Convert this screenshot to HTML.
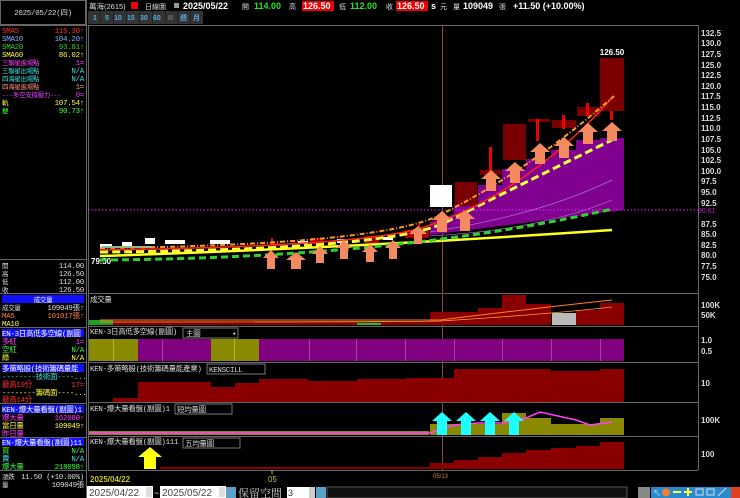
<!DOCTYPE html>
<html><head><meta charset="utf-8"><style>
html,body{margin:0;padding:0;background:#000;width:740px;height:498px;overflow:hidden}
svg{display:block;font-family:"Liberation Sans","Noto Sans CJK TC",sans-serif}
.m{font-family:"Liberation Mono","Noto Sans CJK TC",monospace;font-size:7.5px;letter-spacing:-0.3px}
</style></head><body>
<svg width="740" height="498" viewBox="0 0 740 498" xmlns="http://www.w3.org/2000/svg">
<rect width="740" height="498" fill="#000"/>
<!-- left panel -->
<rect x="0.5" y="0.5" width="85" height="24" fill="#000" stroke="#666"/>
<text x="43" y="15" class="m" fill="#ddd" text-anchor="middle">2025/05/22(四)</text>
<line x1="86.5" y1="0" x2="86.5" y2="498" stroke="#666"/>
<line x1="0" y1="25.5" x2="86" y2="25.5" stroke="#666"/>
<g class="m">
<text x="2" y="33" fill="#ff3030">SMA5</text><text x="84" y="33" fill="#ff3030" text-anchor="end">115.30↑</text>
<text x="2" y="41" fill="#7ab8ff">SMA10</text><text x="84" y="41" fill="#7ab8ff" text-anchor="end">104.20↑</text>
<text x="2" y="49" fill="#30d030">SMA20</text><text x="84" y="49" fill="#30d030" text-anchor="end">93.81↑</text>
<text x="2" y="57" fill="#ffff40">SMA60</text><text x="84" y="57" fill="#ffff40" text-anchor="end">86.02↑</text>
<text x="2" y="65" fill="#ff40ff" font-size="6.5">三聯星進場點</text><text x="84" y="65" fill="#ff40ff" text-anchor="end">1=</text>
<text x="2" y="73" fill="#40e0e0" font-size="6.5">三聯星出場點</text><text x="84" y="73" fill="#40e0e0" text-anchor="end">N/A</text>
<text x="2" y="81" fill="#40e0e0" font-size="6.5">四海星出場點</text><text x="84" y="81" fill="#40e0e0" text-anchor="end">N/A</text>
<text x="2" y="89" fill="#ff9080" font-size="6.5">四海星進場點</text><text x="84" y="89" fill="#ff9080" text-anchor="end">1=</text>
<text x="2" y="97" fill="#e040ff" font-size="6.5">---多空支撐壓力---</text><text x="84" y="97" fill="#e040ff" text-anchor="end">0=</text>
<text x="2" y="105" fill="#ffff40" font-size="6.5">軌</text><text x="84" y="105" fill="#ffff40" text-anchor="end">107.54↑</text>
<text x="2" y="113" fill="#40ff40" font-size="6.5">梗</text><text x="84" y="113" fill="#40ff40" text-anchor="end">90.73↑</text>
</g>
<line x1="0" y1="259.5" x2="86" y2="259.5" stroke="#666"/>
<g class="m" fill="#ddd">
<text x="2" y="268" font-size="6.5">開</text><text x="84" y="268" text-anchor="end">114.00</text>
<text x="2" y="276" font-size="6.5">高</text><text x="84" y="276" text-anchor="end">126.50</text>
<text x="2" y="284" font-size="6.5">低</text><text x="84" y="284" text-anchor="end">112.00</text>
<text x="2" y="292" font-size="6.5">收</text><text x="84" y="292" text-anchor="end">126.50</text>
</g>
<line x1="0" y1="293.5" x2="86" y2="293.5" stroke="#666"/>
<rect x="2" y="295" width="82" height="8" fill="#1010ff"/>
<g class="m">
<text x="43" y="302" fill="#fff" text-anchor="middle" font-size="6.5">成交量</text>
<text x="2" y="310" fill="#ddd" font-size="6.5">成交量</text><text x="84" y="310" fill="#ddd" text-anchor="end">109049張↑</text>
<text x="2" y="318" fill="#ff8040">MA5</text><text x="84" y="318" fill="#ff8040" text-anchor="end">101017張↑</text>
<text x="2" y="326" fill="#ffff40">MA10</text>
</g>
<line x1="0" y1="327.5" x2="86" y2="327.5" stroke="#666"/>
<rect x="2" y="329" width="82" height="8" fill="#1010ff"/>
<g class="m" font-size="6.5">
<text x="2" y="336" fill="#fff">EN-3日高低多空線(副圖</text>
<text x="2" y="344" fill="#ff40ff">多紅</text><text x="84" y="344" fill="#ff40ff" text-anchor="end">1=</text>
<text x="2" y="352" fill="#40ff40">空紅</text><text x="84" y="352" fill="#40ff40" text-anchor="end">N/A</text>
<text x="2" y="360" fill="#ffff40">綠</text><text x="84" y="360" fill="#ffff40" text-anchor="end">N/A</text>
</g>
<line x1="0" y1="362.5" x2="86" y2="362.5" stroke="#666"/>
<rect x="2" y="364" width="82" height="8" fill="#1010ff"/>
<g class="m" font-size="6.5">
<text x="2" y="371" fill="#fff">多策略股(技術籌碼量能</text>
<text x="2" y="379" fill="#40e0e0">--------技術面----...</text>
<text x="2" y="387" fill="#ff3030">最高19分</text><text x="84" y="387" fill="#ff3030" text-anchor="end">17=</text>
<text x="2" y="395" fill="#ffff40">--------籌碼面----...</text>
<text x="2" y="402" fill="#ff3030">最高14分</text>
</g>
<line x1="0" y1="403.5" x2="86" y2="403.5" stroke="#666"/>
<rect x="2" y="405" width="82" height="8" fill="#1010ff"/>
<g class="m" font-size="6.5">
<text x="2" y="412" fill="#fff">KEN-爆大量看盤(副圖)1</text>
<text x="2" y="420" fill="#ff40ff">爆大量</text><text x="84" y="420" fill="#ff40ff" text-anchor="end">162080↑</text>
<text x="2" y="428" fill="#ffff40">當日量</text><text x="84" y="428" fill="#ffff40" text-anchor="end">109049↑</text>
<text x="2" y="436" fill="#ff40ff">昨日量</text>
</g>
<line x1="0" y1="437.5" x2="86" y2="437.5" stroke="#666"/>
<rect x="2" y="438" width="82" height="8" fill="#1010ff"/>
<g class="m" font-size="6.5">
<text x="2" y="445" fill="#fff">EN-爆大量看盤(副圖)11</text>
<text x="2" y="453" fill="#40ff40">買</text><text x="84" y="453" fill="#40ff40" text-anchor="end">N/A</text>
<text x="2" y="461" fill="#40e0e0">賣</text><text x="84" y="461" fill="#40e0e0" text-anchor="end">N/A</text>
<text x="2" y="469" fill="#40ff40">爆大量</text><text x="84" y="469" fill="#40ff40" text-anchor="end">218098↑</text>
</g>
<line x1="0" y1="470.5" x2="86" y2="470.5" stroke="#666"/>
<g class="m" fill="#ddd">
<text x="2" y="479" font-size="6.5">漲跌</text><text x="84" y="479" text-anchor="end">11.50 (+10.00%)</text>
<text x="2" y="487" font-size="6.5">量</text><text x="84" y="487" text-anchor="end">109049張</text>
</g>
<!-- header -->
<g font-size="9" font-weight="bold">
<text x="89" y="9" fill="#ddd" font-weight="normal" font-size="7.5">萬海(2615)</text>
<rect x="131" y="2" width="7" height="7" fill="#e00"/>
<text x="145" y="9" fill="#ddd" font-weight="normal" font-size="7">日線圖</text>
<rect x="174" y="3" width="5" height="5" fill="#999"/>
<text x="183" y="9" fill="#fff">2025/05/22</text>
<text x="242" y="9" fill="#ddd" font-weight="normal" font-size="7">開</text>
<text x="254" y="9" fill="#30e030">114.00</text>
<text x="289" y="9" fill="#ddd" font-weight="normal" font-size="7">高</text>
<rect x="302" y="1" width="32" height="10" fill="#e00"/>
<text x="303" y="9" fill="#fff">126.50</text>
<text x="339" y="9" fill="#ddd" font-weight="normal" font-size="7">低</text>
<text x="350" y="9" fill="#30e030">112.00</text>
<text x="386" y="9" fill="#ddd" font-weight="normal" font-size="7">收</text>
<rect x="396" y="1" width="32" height="10" fill="#e00"/>
<text x="397" y="9" fill="#fff">126.50</text>
<text x="431" y="9" fill="#fff">s</text>
<text x="440" y="9" fill="#ddd" font-weight="normal" font-size="7">元</text>
<text x="453" y="9" fill="#ddd" font-weight="normal" font-size="7">量</text>
<text x="463" y="9" fill="#fff">109049</text>
<text x="499" y="9" fill="#ddd" font-weight="normal" font-size="7">張</text>
<text x="513" y="9" fill="#fff">+11.50 (+10.00%)</text>
</g>
<g font-size="7" font-weight="bold">
<rect x="88" y="11" width="115" height="13" fill="#333"/>
<text x="93" y="20" fill="#5ad">1</text><text x="105" y="20" fill="#5ad">5</text>
<text x="114" y="20" fill="#5ad">10</text><text x="127" y="20" fill="#5ad">15</text>
<text x="140" y="20" fill="#5ad">30</text><text x="153" y="20" fill="#5ad">60</text>
<rect x="168" y="15" width="5" height="5" fill="#555"/>
<text x="180" y="20" fill="#5ad">週</text><text x="193" y="20" fill="#5ad">月</text>
<g stroke="#222"><line x1="100.5" y1="11" x2="100.5" y2="24"/><line x1="113.5" y1="11" x2="113.5" y2="24"/><line x1="126.5" y1="11" x2="126.5" y2="24"/><line x1="139.5" y1="11" x2="139.5" y2="24"/><line x1="152.5" y1="11" x2="152.5" y2="24"/><line x1="165.5" y1="11" x2="165.5" y2="24"/><line x1="177.5" y1="11" x2="177.5" y2="24"/><line x1="190.5" y1="11" x2="190.5" y2="24"/></g>
</g>
<!-- chart frames -->
<g stroke="#666" fill="none">
<line x1="88" y1="25.5" x2="698" y2="25.5"/>
<line x1="88.5" y1="25" x2="88.5" y2="470"/>
<line x1="698.5" y1="25" x2="698.5" y2="470"/>
<line x1="88" y1="293.5" x2="698" y2="293.5"/>
<line x1="88" y1="326.5" x2="698" y2="326.5"/>
<line x1="88" y1="362.5" x2="698" y2="362.5"/>
<line x1="88" y1="402.5" x2="698" y2="402.5"/>
<line x1="88" y1="436.5" x2="698" y2="436.5"/>
<line x1="88" y1="470.5" x2="698" y2="470.5"/>
</g>
<line x1="442.5" y1="25" x2="442.5" y2="470" stroke="#8a4a30" stroke-width="1"/>
<!-- price axis -->
<g font-size="8" font-weight="bold" fill="#ddd">
<text x="701" y="36">132.5</text><text x="701" y="46">130.0</text><text x="701" y="57">127.5</text><text x="701" y="68">125.0</text><text x="701" y="78">122.5</text><text x="701" y="89">120.0</text><text x="701" y="99">117.5</text><text x="701" y="110">115.0</text><text x="701" y="121">112.5</text><text x="701" y="131">110.0</text><text x="701" y="142">107.5</text><text x="701" y="153">105.0</text><text x="701" y="163">102.5</text><text x="701" y="174">100.0</text><text x="701" y="184">97.5</text><text x="701" y="195">95.0</text><text x="701" y="206">92.5</text><text x="701" y="227">87.5</text><text x="701" y="237">85.0</text><text x="701" y="248">82.5</text><text x="701" y="258">80.0</text><text x="701" y="269">77.5</text><text x="701" y="280">75.0</text>
<text x="701" y="308">100K</text><text x="701" y="318">50K</text>
<text x="701" y="343">1.0</text><text x="701" y="354">0.5</text>
<text x="701" y="386">10</text>
<text x="701" y="423">100K</text>
<text x="701" y="457">100</text>
</g>
<text x="698" y="213" font-size="7" fill="#c020c0">90.61</text>
<!-- purple area -->
<path d="M430 222 L454 214 L454 204 L478 204 L478 185 L502 185 L502 169 L526 169 L526 159 L551 159 L551 150 L576 150 L576 140 L600 140 L600 138 L624 138 L624 210 L430 235 Z" fill="#800090"/>
<path d="M430 232 Q540 215 612 180" stroke="#b070d0" fill="none" stroke-width="0.7"/>
<path d="M430 236 Q540 230 612 200" stroke="#a060c0" fill="none" stroke-width="0.7"/>
<line x1="88" y1="210" x2="698" y2="210" stroke="#ff20ff" stroke-dasharray="1.5,2"/>
<!-- small candles -->
<g fill="#fff">
<rect x="100" y="244" width="12" height="4"/><rect x="122" y="242" width="10" height="5"/><rect x="145" y="238" width="10" height="6"/><rect x="165" y="240" width="20" height="4"/><rect x="210" y="240" width="20" height="4"/>
<rect x="298" y="241" width="10" height="3"/><rect x="337" y="239" width="8" height="4"/><rect x="383" y="237" width="10" height="3"/>
</g>
<rect x="102" y="246" width="50" height="2" fill="#40d0d0"/>
<g fill="#a00">
<rect x="270" y="243" width="10" height="3"/><rect x="310" y="238" width="14" height="6"/><rect x="365" y="236" width="14" height="8"/><rect x="405" y="230" width="24" height="8"/>
</g>
<rect x="271" y="238" width="2" height="8" fill="#e00"/><rect x="418" y="224" width="2" height="8" fill="#e00"/>
<rect x="430" y="185" width="22" height="22" fill="#fff"/>
<!-- big candles -->
<g fill="#7a0000">
<rect x="455" y="182" width="22" height="24"/>
<rect x="480" y="170" width="21" height="5"/>
<rect x="503" y="124" width="23" height="36"/>
<rect x="528" y="119" width="22" height="3"/>
<rect x="552" y="120" width="24" height="8"/>
<rect x="577" y="107" width="23" height="9"/>
<rect x="600" y="58" width="24" height="53"/>
</g>
<g fill="#e00">
<rect x="489" y="147" width="3" height="28"/><rect x="536" y="119" width="3" height="22"/><rect x="562" y="115" width="3" height="14"/><rect x="586" y="103" width="3" height="13"/><rect x="610" y="111" width="3" height="9"/>
</g>
<text x="612" y="55" font-size="8" font-weight="bold" fill="#fff" text-anchor="middle">126.50</text>
<text x="91" y="264" font-size="8" font-weight="bold" fill="#fff">79.50</text>
<!-- MA lines -->
<path d="M100 256 Q350 248 612 230" stroke="#ffff20" stroke-width="2.5" fill="none"/>
<path d="M100 260 Q400 258 612 209" stroke="#30d030" stroke-width="3" stroke-dasharray="7,4" fill="none"/>
<path d="M100 252 Q400 250 450 220 Q540 175 612 140" stroke="#ffff40" stroke-width="3" stroke-dasharray="8,4" fill="none"/>
<path d="M100 250 Q380 246 430 225 Q530 190 612 98" stroke="#ff2020" stroke-width="1.5" fill="none"/>
<path d="M100 248 Q380 245 440 215 Q530 170 614 96" stroke="#ff9a20" stroke-width="2" stroke-dasharray="5,2,1,2" fill="none"/>
<!-- salmon arrows -->
<g fill="#f58a60">
<path d="M271 250 l-8 8 h4 v11 h8 v-11 h4 z"/>
<path d="M296 252 l-10 8 h5 v9 h10 v-9 h5 z"/>
<path d="M320 246 l-8 8 h4 v9 h8 v-9 h4 z"/>
<path d="M344 240 l-8 8 h4 v11 h8 v-11 h4 z"/>
<path d="M370 244 l-8 8 h4 v10 h8 v-10 h4 z"/>
<path d="M393 240 l-8 8 h4 v11 h8 v-11 h4 z"/>
<path d="M418 226 l-9 8 h5 v10 h8 v-10 h5 z"/>
<path d="M442 211 l-10 9 h5 v12 h10 v-12 h5 z"/>
<path d="M465 210 l-10 9 h5 v12 h10 v-12 h5 z"/>
<path d="M491 170 l-10 9 h5 v12 h10 v-12 h5 z"/>
<path d="M515 162 l-10 9 h5 v12 h10 v-12 h5 z"/>
<path d="M540 143 l-10 9 h5 v12 h10 v-12 h5 z"/>
<path d="M564 137 l-10 9 h5 v12 h10 v-12 h5 z"/>
<path d="M588 123 l-10 9 h5 v12 h10 v-12 h5 z"/>
<path d="M612 122 l-10 9 h5 v10 h10 v-10 h5 z"/>
</g>
<!-- volume panel -->
<text x="90" y="302" class="m" fill="#ddd" font-size="6.5">成交量</text>
<g fill="#8a0000">
<rect x="113" y="321" width="340" height="4"/>
<rect x="430" y="312" width="24" height="13"/><rect x="454" y="312" width="24" height="13"/><rect x="478" y="308" width="24" height="17"/><rect x="502" y="295" width="24" height="30"/><rect x="526" y="304" width="25" height="21"/><rect x="576" y="310" width="24" height="15"/><rect x="600" y="303" width="24" height="22"/>
</g>
<rect x="89" y="320" width="24" height="5" fill="#20a020"/><rect x="357" y="323" width="24" height="2" fill="#20c020"/>
<rect x="552" y="313" width="24" height="12" fill="#bbb"/>
<path d="M100 320 Q400 320 440 320 Q520 310 612 300" stroke="#ff8020" fill="none"/>
<path d="M100 322 Q400 322 440 321 Q540 315 612 307" stroke="#ffa030" fill="none" stroke-width="0.8"/>
<!-- panel2 -->
<text x="90" y="334" class="m" fill="#ddd" font-size="6.5">KEN-3日高低多空線(副圖)</text>
<rect x="183" y="328" width="55" height="10" fill="#000" stroke="#777"/><text x="186" y="336" class="m" fill="#ddd" font-size="6.5">主圖</text><text x="232" y="336" class="m" fill="#ddd">▪</text>
<rect x="89" y="339" width="49" height="22" fill="#8a8a00"/>
<rect x="138" y="339" width="73" height="22" fill="#800080"/>
<rect x="211" y="339" width="48" height="22" fill="#8a8a00"/>
<rect x="259" y="339" width="365" height="22" fill="#800080"/>
<g stroke="#c8c850" stroke-width="0.7"><line x1="113.5" y1="339" x2="113.5" y2="361"/><line x1="234.5" y1="339" x2="234.5" y2="361"/></g>
<g stroke="#b060b0" stroke-width="0.7"><line x1="162.5" y1="339" x2="162.5" y2="361"/><line x1="309.5" y1="339" x2="309.5" y2="361"/><line x1="356.5" y1="339" x2="356.5" y2="361"/><line x1="405.5" y1="339" x2="405.5" y2="361"/><line x1="454.5" y1="339" x2="454.5" y2="361"/><line x1="502.5" y1="339" x2="502.5" y2="361"/><line x1="551.5" y1="339" x2="551.5" y2="361"/><line x1="600.5" y1="339" x2="600.5" y2="361"/></g>
<!-- panel3 -->
<text x="90" y="371" class="m" fill="#ddd" font-size="6.5">KEN-多策略股(技術籌碼量能產業)</text>
<rect x="207" y="364" width="58" height="10" fill="#000" stroke="#777"/><text x="209" y="372" class="m" fill="#ddd">KENSCILL</text>
<g fill="#8a0000">
<rect x="113" y="398" width="25" height="4"/><rect x="138" y="382" width="73" height="20"/><rect x="211" y="387" width="24" height="15"/><rect x="235" y="383" width="24" height="19"/><rect x="259" y="379" width="49" height="23"/><rect x="308" y="381" width="49" height="21"/><rect x="357" y="379" width="49" height="23"/><rect x="406" y="378" width="48" height="24"/><rect x="454" y="369" width="97" height="33"/><rect x="551" y="371" width="49" height="31"/><rect x="600" y="369" width="24" height="33"/>
</g>
<!-- panel4 -->
<text x="90" y="411" class="m" fill="#ddd" font-size="6.5">KEN-爆大量看盤(副圖)1</text>
<rect x="175" y="404" width="57" height="10" fill="#000" stroke="#777"/><text x="177" y="412" class="m" fill="#ddd" font-size="6.5">短均量圖</text>
<rect x="89" y="431" width="340" height="4" fill="#8a8a00"/>
<rect x="430" y="424" width="24" height="11" fill="#8a8a00"/><rect x="454" y="424" width="24" height="11" fill="#8a8a00"/><rect x="478" y="424" width="24" height="11" fill="#8a8a00"/><rect x="502" y="413" width="24" height="22" fill="#8a8a00"/><rect x="526" y="418" width="25" height="17" fill="#8a8a00"/><rect x="551" y="424" width="25" height="11" fill="#8a8a00"/><rect x="576" y="424" width="24" height="11" fill="#8a8a00"/><rect x="600" y="418" width="24" height="17" fill="#8a8a00"/>
<path d="M89 433 L430 433 L454 425 L478 423 L502 423 L526 418 L540 412 L576 420 L590 425 L612 422" stroke="#ff40ff" stroke-width="1.5" fill="none"/>
<g fill="#20ffff">
<path d="M442 412 l-10 9 h5 v14 h10 v-14 h5 z"/>
<path d="M466 412 l-10 9 h5 v14 h10 v-14 h5 z"/>
<path d="M490 412 l-10 9 h5 v14 h10 v-14 h5 z"/>
<path d="M514 412 l-10 9 h5 v14 h10 v-14 h5 z"/>
</g>
<!-- panel5 -->
<text x="90" y="444" class="m" fill="#ddd" font-size="6.5">KEN-爆大量看盤(副圖)111</text>
<rect x="183" y="438" width="57" height="10" fill="#000" stroke="#777"/><text x="185" y="446" class="m" fill="#ddd" font-size="6.5">五均量圖</text>
<path d="M150 447 l-12 10 h6 v12 h12 v-12 h6 z" fill="#ffff10"/>
<g fill="#8a0000">
<rect x="160" y="467" width="270" height="2"/><rect x="430" y="463" width="24" height="6"/><rect x="454" y="460" width="24" height="9"/><rect x="478" y="457" width="24" height="12"/><rect x="502" y="453" width="24" height="16"/><rect x="526" y="450" width="25" height="19"/><rect x="551" y="448" width="25" height="21"/><rect x="576" y="446" width="24" height="23"/><rect x="600" y="442" width="24" height="27"/>
</g>
<!-- date axis -->
<text x="90" y="482" font-size="8" font-weight="bold" fill="#c8c820">2025/04/22</text>
<line x1="272" y1="470" x2="272" y2="474" stroke="#c8c820"/>
<text x="268" y="482" font-size="8" fill="#c8c820">05</text>
<text x="433" y="478" font-size="6" fill="#d08040">05/13</text>
<!-- bottom bar -->
<rect x="87" y="486" width="66" height="12" fill="#fff"/><text x="89" y="496" font-size="10" fill="#444">2025/04/22</text><rect x="146" y="487" width="6" height="10" fill="#ddd"/>
<text x="154" y="496" font-size="9" fill="#ddd">~</text>
<rect x="160" y="486" width="66" height="12" fill="#fff"/><text x="162" y="496" font-size="10" fill="#444">2025/05/22</text><rect x="219" y="487" width="6" height="10" fill="#ddd"/>
<rect x="226" y="487" width="10" height="11" fill="#5aa0c8"/>
<text x="238" y="497" font-size="11" fill="#ccc" font-family="Noto Serif CJK SC, serif">保留空間</text>
<rect x="287" y="487" width="28" height="11" fill="#fff"/><text x="288" y="496" font-size="9" fill="#333">3</text><rect x="309" y="487" width="6" height="11" fill="#ccc"/>
<rect x="316" y="487" width="10" height="11" fill="#5aa0c8"/>
<rect x="327" y="487" width="300" height="11" fill="#111" stroke="#555"/>
<rect x="638" y="487" width="12" height="11" fill="#888"/>
<rect x="651" y="487" width="80" height="11" fill="#2a8ad0"/>
<g fill="#eee" font-size="8"><text x="653" y="496">↖</text><circle cx="666" cy="492.5" r="4" fill="#f08030"/><rect x="673" y="491" width="8" height="2" fill="#ffff40"/><rect x="684" y="491" width="8" height="2" fill="#ffff40"/><rect x="687" y="488" width="2" height="8" fill="#ffff40"/><rect x="696" y="489" width="7" height="6" fill="none" stroke="#ddd"/><rect x="707" y="489" width="7" height="6" fill="none" stroke="#ddd"/><line x1="718" y1="496" x2="726" y2="488" stroke="#ddd"/></g>
<rect x="731" y="487" width="9" height="11" fill="#e04020"/>
</svg>
</body></html>
